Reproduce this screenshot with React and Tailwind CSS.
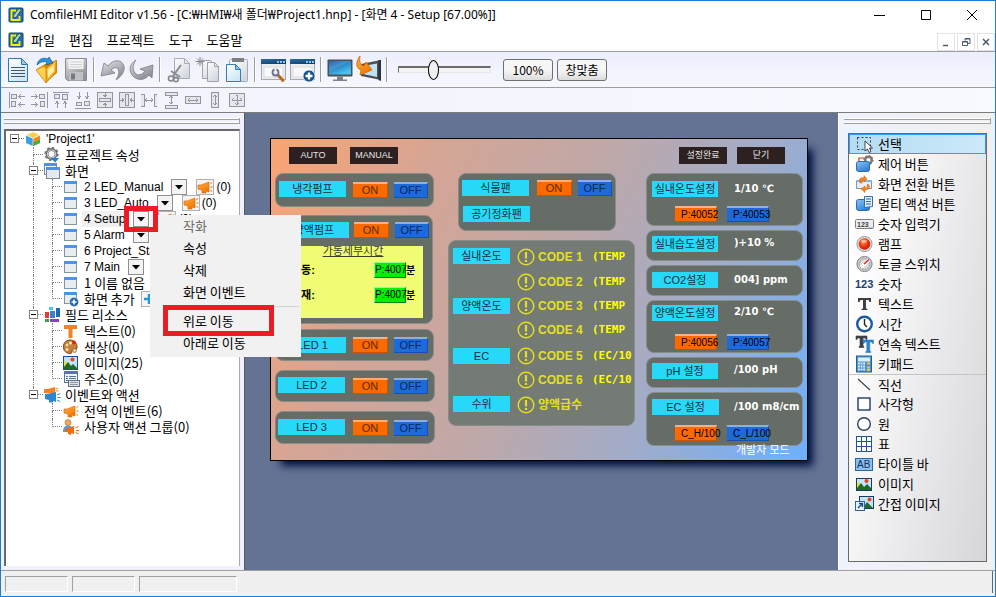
import React from 'react';

/* ---------- shared gradients ---------- */

function Gradients() {
  const stops = {
    gPaper: ['#ffffff', '#cfe6f5'],
    gGray: ['#e4e4e6', '#8f9196'],
    gArrow: ['#e2e2e4', '#8b8d92'],
    gScreen: ['#0a4fa0', '#4cc4f0'],
    gOrange: ['#ffb347', '#f07800'],
    gBlue: ['#8cc4f5', '#2f80d8'],
    gYellow: ['#ffe27a', '#f0a000'],
    gBar: ['#2f6ea5', '#0f4272'],
    gSheet: ['#fdfdfd', '#d4d9e0'],
  };
  return (
    <svg width="0" height="0" className="absolute" aria-hidden="true">
      <defs>
        {Object.entries(stops).map(([id, [a, b]]) => (
          <linearGradient key={id} id={id} x1="0" y1="0" x2="0.6" y2="1">
            <stop offset="0" stopColor={a} />
            <stop offset="1" stopColor={b} />
          </linearGradient>
        ))}
        <radialGradient id="gLamp" cx="0.4" cy="0.35" r="0.7">
          <stop offset="0" stopColor="#ff9a5a" />
          <stop offset="0.5" stopColor="#f03a10" />
          <stop offset="1" stopColor="#c01800" />
        </radialGradient>
      </defs>
    </svg>
  );
}

function Svg({ w = 16, h = w, vb, children }) {
  return (
    <svg width={w} height={h} viewBox={vb || `0 0 ${w} ${h}`} fill="none" className="block shrink-0" aria-hidden="true">
      {children}
    </svg>
  );
}

/* ---------- main tool bar icons ---------- */

function AppLogo() {
  return (
    <Svg w={16}>
      <rect x="1" y="1" width="14" height="14" rx="1" fill="#2a6fae" stroke="#0c3f75" />
      <path d="M8 3.500H3.500v9.500h8V9" stroke="#f2f200" strokeWidth="1.800" />
      <path d="M5.500 9l1 2 2-1 4.500-7-2-1z" fill="#8fd0f0" stroke="#123c66" strokeWidth=".8" />
      <path d="M6 9.500l5-7 1.500 1" stroke="#f2f200" />
    </Svg>
  );
}
function NewDoc() {
  return (
    <Svg w={22} h={26}>
      <path d="M1.500 1.500h13l6 6v17h-19z" fill="url(#gPaper)" stroke="#2f78ac" />
      <path d="M14.500 1.500v6h6z" fill="#9ccbe8" stroke="#2f78ac" />
      <path d="M4 10.500h14M4 13.500h14M4 16.500h14M4 19.500h14" stroke="#41586c" />
    </Svg>
  );
}
function OpenFolder() {
  return (
    <Svg w={26} h={28}>
      <path d="M3 13l8-5 12-4v13l-11 9z" fill="#d98a00" />
      <path d="M12 13l10-9v12l-10 11z" fill="url(#gYellow)" stroke="#c77c00" strokeWidth=".8" />
      <path d="M2 14l8-4 2 3 0 14z" fill="#ffcf4d" stroke="#d08400" strokeWidth=".8" />
      <path d="M14 14l6-5v6l-6 7z" fill="#fff0b0" />
      <path d="M3 9c1-6 6-8 11-6l1-2 4 6-7 2 1-3c-4-1-7 0-10 3z" fill="#2b94dc" stroke="#0f5c9c" strokeWidth=".7" />
    </Svg>
  );
}
function Save() {
  return (
    <Svg w={24} h={26}>
      <path d="M1.500 1.500h21v22h-19l-2-2z" fill="url(#gGray)" stroke="#8a8c90" />
      <rect x="4.500" y="2" width="15" height="10" fill="#f4f4f5" />
      <path d="M6 5h12M6 7.500h12M6 10h12" stroke="#cfd0d3" />
      <rect x="5" y="15" width="14" height="8.500" fill="#bfc0c4" />
      <rect x="7" y="16.500" width="4" height="6" fill="#77797e" />
    </Svg>
  );
}
function Undo() {
  return (
    <Svg w={26} h={24}>
      <path d="M1 18L4 5l4 3C13 1 22 1 24 8c1 5-2 10-8 14 3-5 4-10 1-12-2-1-4 0-6 2l4 3z" fill="url(#gArrow)" stroke="#85878c" strokeWidth=".9" />
    </Svg>
  );
}
function Redo() {
  return (
    <Svg w={26} h={24}>
      <path d="M7 2C0 6-1 14 5 19c5 4 11 3 15-2l3 3 1-13-13 4 5 2c-3 4-7 5-10 2-3-4-2-9 1-13z" fill="url(#gArrow)" stroke="#85878c" strokeWidth=".9" />
    </Svg>
  );
}
function Cut() {
  return (
    <Svg w={24} h={26}>
      <path d="M7.500 1.500h10l5 5v15h-15z" fill="url(#gSheet)" stroke="#a9adb3" />
      <path d="M17.500 1.500v5h5" stroke="#a9adb3" />
      <path d="M14 8L6 19M4 14l9 6" stroke="#8a8d92" strokeWidth="2" />
      <circle cx="4" cy="21.500" r="2.500" stroke="#85878c" strokeWidth="1.600" />
      <circle cx="9" cy="22.500" r="2.200" stroke="#85878c" strokeWidth="1.600" />
    </Svg>
  );
}
function Copy() {
  return (
    <Svg w={26} h={26}>
      <path d="M7.500 3.500h8l4 4v14h-12z" fill="url(#gSheet)" stroke="#9fa3a9" />
      <path d="M12.500 5.500h7l4 4v15h-11z" fill="url(#gSheet)" stroke="#9fa3a9" />
      <path d="M19.500 5.500v4h4" stroke="#9fa3a9" />
      <path d="M5 0v9M.5 4.500h9M2 1.500l6 6M8 1.500l-6 6" stroke="#85888d" />
    </Svg>
  );
}
function Paste() {
  return (
    <Svg w={24} h={26}>
      <rect x="4.500" y="2.500" width="18" height="22" rx="1" fill="url(#gSheet)" stroke="#a7abb1" />
      <path d="M7 1h12v4H7z" fill="#7c8086" />
      <path d="M1.500 7.500h9l5 5v12h-14z" fill="url(#gPaper)" stroke="#2f83bb" />
      <path d="M10.500 7.500v5h5z" fill="#8ec6e8" stroke="#2f83bb" />
    </Svg>
  );
}
function WindowBase() {
  return (
    <>
      <rect x=".5" y="2.500" width="24" height="20" fill="#ececee" stroke="#a6a9ae" />
      <rect x="0" y="2" width="25" height="5" fill="url(#gBar)" />
      <path d="M16 4h2v2h-2zM19 4h2v2h-2zM22 4h2v2h-2z" fill="#8fc8ee" />
      <rect x="3" y="10" width="19" height="10" fill="#f8f8f9" stroke="#cfd1d4" strokeWidth=".7" />
    </>
  );
}
function WindowTool() {
  return (
    <Svg w={26} h={26}>
      <WindowBase />
      <path d="M16 17l6 6.500" stroke="#b86a1c" strokeWidth="3" strokeLinecap="round" />
      <circle cx="14.500" cy="15.500" r="3" fill="#e8ecf4" stroke="#6b7390" strokeWidth="1.800" />
      <path d="M14.500 15.500V11" stroke="#ececee" strokeWidth="2" />
    </Svg>
  );
}
function WindowAdd() {
  return (
    <Svg w={26} h={26}>
      <WindowBase />
      <circle cx="19" cy="19" r="6" fill="#15538c" stroke="#e9f2fa" strokeWidth=".8" />
      <path d="M15.500 19h7M19 15.500v7" stroke="#fff" strokeWidth="2.400" />
    </Svg>
  );
}
function Monitor() {
  return (
    <Svg w={26} h={26}>
      <rect x=".5" y="2.500" width="25" height="17" rx="1" fill="#4b5056" />
      <rect x="2" y="4" width="22" height="13.500" fill="url(#gScreen)" />
      <path d="M2 4h22L2 14z" fill="#fff" opacity=".14" />
      <path d="M10 19.500h6v3h4v1.500H6v-1.500h4z" fill="#7c8187" />
    </Svg>
  );
}
function Download() {
  return (
    <Svg w={26} h={28}>
      <path d="M5 8l20-4v20L5 20z" fill="#4b4f55" />
      <path d="M7 10l14-2.500v13.500L7 18z" fill="#bfe2f4" />
      <path d="M22.500 4h2.500v21l-2.500-1z" fill="#2f3236" />
      <path d="M4 0C0 5-1 12 5 14l-1 5 12-5-6-8-2 4C4 9 3 5 4 0z" fill="url(#gOrange)" stroke="#d06a00" strokeWidth=".8" />
    </Svg>
  );
}

/* ---------- alignment tool bar icons (18 x 18) ---------- */

const alignIcons = [
  ['왼쪽 맞춤', <path key="a" d="M1 1v16M3.500 3.500h5v4h-5zM17 5.500h-6M13 3l-2.500 2.500L13 8M3.500 10.500h4v5h-4zM17 13.500h-6M13 11l-2.500 2.500L13 16" />],
  ['오른쪽 맞춤', <path key="a" d="M17 1v16M9.500 3.500h5v4h-5zM1 5.500h6M5 3l2.500 2.500L5 8M10.500 10.500h4v5h-4zM1 13.500h6M5 11l2.500 2.500L5 16" />],
  ['위쪽 맞춤', <path key="a" d="M1 1h16M2.500 3.500h5v4h-5zM10.500 3.500h5v5h-5zM5 17v-6M3 13l2-2.500L7 13M13 17v-6M11 13l2-2.500 2 2.500" />],
  ['아래쪽 맞춤', <path key="a" d="M1 17h16M2.500 11.500h5v3h-5zM10.500 10.500h5v4h-5zM5 1v6M3 5l2 2.500L7 5M13 1v6M11 5l2 2.500L15 5" />],
  ['세로 가운데', <path key="a" d="M1.500 1.500h15v15h-15zM3.500 7.500h11v3h-11zM9 1.500v4M9 16.500v-4M7.500 4L9 5.500 10.500 4M7.500 14L9 12.500l1.500 1.500" />],
  ['가로 가운데', <path key="a" d="M1.500 1.500h15v15h-15zM7.500 3.500h3v11h-3zM1.500 9h4M16.500 9h-4M4 7.500L5.500 9 4 10.500M14 7.500L12.500 9l1.500 1.500" />],
  ['가로 간격', <path key="a" d="M1 3h3v12H1M17 3h-3v12h3M5 9h8M7 7L5 9l2 2M11 7l2 2-2 2" />],
  ['세로 간격', <path key="a" d="M3 1h12v3H3zM3 14h12v3H3zM9 5v8M7 7l2-2 2 2M7 11l2 2 2-2" />],
  ['너비 맞춤', <path key="a" d="M1.500 5.500h15v7h-15zM4 9h10M6 7L4 9l2 2M12 7l2 2-2 2" />],
  ['높이 맞춤', <path key="a" d="M5.500 1.500h7v15h-7zM9 4v10M7 6l2-2 2 2M7 12l2 2 2-2" />],
  ['크기 맞춤', <path key="a" d="M1.500 2.500h15v13h-15zM9 4v10M4 9h10M7.500 5.500L9 4l1.500 1.500M7.500 12.500L9 14l1.500-1.500M5.500 7.500L4 9l1.500 1.500M12.500 7.500L14 9l-1.500 1.500" />],
];

/* ---------- tree icons ---------- */

const treeIcons = {
  cube: (
    <Svg w={18} h={16}>
      <path d="M9 1l6.500 3L9 7 2.500 4z" fill="#ffd050" />
      <path d="M2 4.500L8.700 7.500V15L2 12z" fill="#3aa0e6" />
      <path d="M16 4.500L9.300 7.500V15L16 12z" fill="#f5871e" />
      <path d="M9.300 11.500L16 8.500V12l-6.700 3z" fill="#3fae49" />
    </Svg>
  ),
  gear: (
    <Svg w={18} h={16}>
      <circle cx="8.500" cy="7" r="4.500" stroke="#6f7276" strokeWidth="3" />
      <circle cx="8.500" cy="7" r="6.200" stroke="#6f7276" strokeWidth="1.800" strokeDasharray="2.400 2.400" />
      <circle cx="8.500" cy="7" r="4" stroke="#c9cbcf" strokeWidth="1.200" />
      <path d="M8 11h8l-4 4.500z" fill="#1f7fd6" />
    </Svg>
  ),
  windows: (
    <Svg w={18} h={16}>
      <rect x="1.500" y=".5" width="12" height="11" fill="#f2f4f8" stroke="#7b8aa0" />
      <rect x="1" y="0" width="13" height="3" fill="#4a94e2" />
      <rect x="3.500" y="4.500" width="13" height="11" fill="#e6e9ee" stroke="#7b8aa0" />
      <rect x="3" y="4" width="14" height="3" fill="#4a94e2" />
    </Svg>
  ),
  screen: (
    <Svg w={18} h={16}>
      <rect x="2.500" y="2.500" width="12" height="11" fill="#e8ebf0" stroke="#8793a4" />
      <rect x="2" y="2" width="13" height="3" fill="#4a94e2" />
    </Svg>
  ),
  screenAdd: (
    <Svg w={18} h={16}>
      <rect x="2.500" y="1.500" width="12" height="11" fill="#e8ebf0" stroke="#8793a4" />
      <rect x="2" y="1" width="13" height="3" fill="#4a94e2" />
      <circle cx="12" cy="11" r="4.700" fill="#2465a8" stroke="#fff" strokeWidth=".6" />
      <path d="M9.500 11h5M12 8.500v5" stroke="#fff" strokeWidth="1.600" />
    </Svg>
  ),
  blocks: (
    <Svg w={18} h={16}>
      <rect x="6" y="0" width="4" height="3" fill="#46c8f0" />
      <rect x="2" y="5" width="4" height="6" fill="#e23c34" />
      <rect x="7" y="4" width="5" height="7" fill="#3f7fd2" />
      <rect x="13" y="1" width="4" height="9" fill="#1e6ab4" />
      <rect x="2" y="12" width="4" height="3" fill="#38a04a" />
      <rect x="7" y="12" width="9" height="3" fill="#8a3fc0" />
    </Svg>
  ),
  textT: (
    <Svg w={18} h={16}>
      <path d="M2 2h13v4h-4.500v9h-4V6H2z" fill="#f58220" />
    </Svg>
  ),
  palette: (
    <Svg w={18} h={16}>
      <path d="M8 1C3 1 1 5 1.500 9S6 15 9 14.500c1.500-.5 0-2.500 1.500-3.500s4 .5 4.500-2C15.500 4 12 1 8 1z" fill="#c98038" stroke="#7c4614" />
      <circle cx="5" cy="6" r="1.500" fill="#f4d8a0" />
      <circle cx="8.500" cy="4" r="1.500" fill="#f8ecd0" />
      <circle cx="12" cy="3.500" r="2" fill="#e02418" />
      <circle cx="5" cy="10.500" r="1.500" fill="#f8e8c0" />
      <circle cx="12.500" cy="11.500" r="2" fill="#e8d4b0" stroke="#7c4614" strokeWidth=".6" />
    </Svg>
  ),
  picture: (
    <Svg w={18} h={16}>
      <rect x="1.500" y="1.500" width="14" height="13" fill="#bfe4f8" stroke="#15508c" />
      <path d="M2 5l3 3v6H2z" fill="#e8e23c" />
      <path d="M2 14v-2l4-5 3 4 2-2 4 4v1z" fill="#1f6a2c" />
      <circle cx="10.500" cy="4.500" r="2" fill="#e84020" />
    </Svg>
  ),
  address: (
    <Svg w={18} h={16}>
      <rect x="2.500" y=".5" width="13" height="11" fill="#eef3f9" stroke="#52769e" />
      <rect x="2" y="0" width="14" height="3" fill="#4a7ab0" />
      <path d="M4 5.500h2M7 5.500h7M4 7.500h2M7 7.500h7M4 9.500h2" stroke="#52769e" />
      <rect x="6.500" y="9.500" width="11" height="6" fill="#dfe4ea" stroke="#62707e" />
      <path d="M8 11.500h8M8 13.500h8" stroke="#8d98a4" />
    </Svg>
  ),
  horns: (
    <Svg w={18} h={16}>
      <path d="M1 2h4l7-2v7L1 6z" fill="#f58220" />
      <path d="M12.500 2l2-1M13 4h2.500" stroke="#f58220" />
      <path d="M2 7h3l8-2v10l-3-1v1.500H6V13l-4-1z" fill="#2d86d2" />
      <path d="M14 8l3-1.500M14.500 10.500h3M14 13l3 1.500" stroke="#2d86d2" />
    </Svg>
  ),
  horn: <Horn />,
  userHorn: (
    <Svg w={18} h={16}>
      <circle cx="6" cy="3.500" r="3" fill="#f0a860" stroke="#b86a28" strokeWidth=".6" />
      <path d="M1 13c0-5 2-6.500 5-6.500S11 8 11 13z" fill="#5a9ad8" />
      <path d="M3 10l9-3v8l-3-1v2l-3-1v-2l-3-1z" fill="#f06a10" />
      <path d="M13.500 9l3-1.500M14 11.500h3M13.500 13.500l3 1.500" stroke="#f06a10" />
    </Svg>
  ),
};

function Horn() {
  return (
    <Svg w={18} h={16}>
      <path d="M2 6h3l8-3v10l-3-1v2H6v-3L2 10z" fill="url(#gOrange)" stroke="#e06000" strokeWidth=".6" />
      <path d="M14.500 4.500l1.500-1M14.500 8h2M14.500 11.500l1.500 1" stroke="#e06000" />
    </Svg>
  );
}

/* ---------- toolbox icons ---------- */

const toolIcons = {
  select: (
    <Svg w={20} h={18}>
      <rect x="2.500" y="2.500" width="13" height="12" stroke="#2c3c4c" strokeDasharray="2 2" />
      <path d="M10 6v10l2.500-2 1.500 3.500 2-1-1.500-3.500h3z" fill="#fff" stroke="#1a1a2a" strokeWidth=".8" />
    </Svg>
  ),
  control: (
    <Svg w={20} h={18}>
      <path d="M4 8V3h6" stroke="#e02818" strokeWidth="1.200" />
      <circle cx="13.500" cy="5" r="3.300" stroke="#75797e" strokeWidth="2.400" />
      <circle cx="13.500" cy="5" r="4.700" stroke="#75797e" strokeDasharray="1.800 1.800" />
      <rect x="1.500" y="6.500" width="13" height="10" rx="2" fill="url(#gBlue)" stroke="#2a6cb4" />
    </Svg>
  ),
  swap: (
    <Svg w={20} h={18}>
      <rect x="1.500" y="5.500" width="15" height="8" fill="#e8eef5" stroke="#8195ae" />
      <path d="M1 5h16v2H1z" fill="#8ab4e0" />
      <path d="M5 8c-2-4 1-6 4-5V.5L12 4 9 7V5c-2 0-2 1-2 3zM13 9c3 3 1 6-3 6v2.500L6 14l4-3v2c2 0 3-1 2-3z" fill="#f58220" stroke="#d06000" strokeWidth=".5" />
    </Svg>
  ),
  multi: (
    <Svg w={20} h={18}>
      <rect x="1.500" y="4.500" width="13" height="11" rx="2" fill="url(#gBlue)" stroke="#2a6cb4" />
      <path d="M9.500 1.500h8v10l-8 1z" fill="#e4f0fa" stroke="#2f6ca8" />
      <path d="M11 4h5M11 6.500h5M11 9h5" stroke="#39648e" />
    </Svg>
  ),
  input: (
    <Svg w={20} h={18}>
      <rect x=".5" y="4.500" width="18" height="9" rx="1" fill="#eeeeee" stroke="#7c7f84" />
      <text x="2" y="12" fontSize="7" fontWeight="bold" fill="#3c4046" fontFamily="Liberation Sans">123_</text>
    </Svg>
  ),
  lamp: (
    <Svg w={20} h={18}>
      <circle cx="9.500" cy="9" r="7.600" fill="#d9dadc" stroke="#9a9da1" />
      <circle cx="9.500" cy="9" r="5.800" fill="url(#gLamp)" />
      <ellipse cx="9" cy="6" rx="3" ry="1.500" fill="#fff" opacity=".45" />
    </Svg>
  ),
  toggle: (
    <Svg w={20} h={18}>
      <circle cx="9.500" cy="9" r="7.600" fill="#c9cbce" stroke="#83878c" />
      <circle cx="9.500" cy="9" r="5.400" fill="#dcdcde" stroke="#a4a7ab" />
      <path d="M5 13L14 5" stroke="#fff" strokeWidth="3.600" />
      <path d="M9 9l5-4.500" stroke="#e02020" strokeWidth="1.600" />
      <path d="M4.500 11.500l2 2.500" stroke="#8a8d92" />
    </Svg>
  ),
  number: (
    <Svg w={20} h={18}>
      <text x="0" y="13" fontSize="11" fontWeight="bold" fill="#20406c" fontFamily="Liberation Sans">123</text>
    </Svg>
  ),
  text: (
    <Svg w={20} h={18}>
      <path d="M3 3h13v4h-1.500l-1-2H11v8.500l1.500.5v1h-6v-1l1.500-.5V5H5.500l-1 2H3z" fill="#3e4247" />
    </Svg>
  ),
  clock: (
    <Svg w={20} h={18}>
      <circle cx="9.500" cy="9" r="7.300" fill="#fff" stroke="#1c5a9c" strokeWidth="2.400" />
      <path d="M9.500 4v5.500L12 12" stroke="#222" strokeWidth="1.400" />
    </Svg>
  ),
  texts: (
    <Svg w={20} h={18}>
      <path d="M1 1h11v3.500h-1l-.7-1.500H8v8l1 .5v1H4v-1l1-.5V3H2.700L2 4.500H1z" fill="#3e4247" stroke="#3e4247" strokeWidth=".6" />
      <path d="M8 5h10.500v3.500h-1l-.7-1.500h-2v9l1 .5v1h-5v-1l1-.5V7H9.700L9 8.500H8z" fill="#2a83cc" stroke="#2a83cc" strokeWidth=".6" />
    </Svg>
  ),
  keypad: (
    <Svg w={20} h={18}>
      <rect x="1.500" y="1" width="15" height="16" fill="#4d93d0" stroke="#22609c" />
      <rect x="3" y="2.500" width="12" height="4" fill="#dcecf8" />
      <path d="M3 8.500h7M3 11.500h7M3 14.500h7" stroke="#e2eefa" strokeWidth="2" strokeDasharray="1.800 .8" />
      <path d="M12 8.500h3M12 12.500h3M12 15h3" stroke="#f5c040" strokeWidth="2" />
    </Svg>
  ),
  line: (
    <Svg w={20} h={18}>
      <path d="M3 3l12 11" stroke="#3c4450" strokeWidth="1.200" />
    </Svg>
  ),
  rect: (
    <Svg w={20} h={18}>
      <rect x="3" y="3" width="12" height="12" fill="#fff" stroke="#1c3c6c" strokeWidth="1.400" />
    </Svg>
  ),
  circle: (
    <Svg w={20} h={18}>
      <circle cx="9" cy="9" r="6.300" fill="#fff" stroke="#2c4058" strokeWidth="1.400" />
    </Svg>
  ),
  table: (
    <Svg w={20} h={18}>
      <rect x="1.500" y="1.500" width="15" height="15" fill="#fff" stroke="#1f5596" />
      <path d="M6.500 2v14M11.500 2v14M2 6.500h14M2 11.500h14" stroke="#1f5596" />
    </Svg>
  ),
  titlebar: (
    <Svg w={20} h={18}>
      <rect x=".5" y="3.500" width="17" height="12" fill="#8cc0ee" stroke="#2a64a4" />
      <text x="2" y="13" fontSize="10" fill="#10305c" fontFamily="Liberation Sans">AB</text>
    </Svg>
  ),
  image: (
    <Svg w={20} h={18}>
      <rect x="1.500" y="3.500" width="15" height="12" fill="#c4e6fa" stroke="#1c3c64" />
      <path d="M2 6l3 3v6H2z" fill="#e8e23c" />
      <path d="M2 15v-2l4-5 3 4 3-3 4 4v2z" fill="#1f6a2c" />
      <circle cx="11.500" cy="6" r="2" fill="#e84020" />
    </Svg>
  ),
  indirect: (
    <Svg w={20} h={18}>
      <rect x="4.500" y="1.500" width="14" height="12" fill="#c4e6fa" stroke="#1c3c64" />
      <path d="M8 13l4-6 3 3 3 3z" fill="#1f6a2c" />
      <circle cx="14.500" cy="4.500" r="2" fill="#e84020" />
      <rect x=".5" y="6.500" width="9" height="9" fill="#e6f1fb" stroke="#2a64a4" />
      <path d="M3 13l4-4M4 8.500h3.500V12" stroke="#154a86" strokeWidth="1.400" />
    </Svg>
  ),
};

/* ---------- title and menu ---------- */

function TitleBar() {
  return (
    <header className="flex h-7 shrink-0 items-center bg-white pl-[7px]">
      <AppLogo />
      <h1 className="ml-1.5 flex-1 truncate font-['Noto_Sans','Noto_Sans_CJK_KR',sans-serif] text-xs">
        ComfileHMI Editor v1.56 - [C:₩HMI₩새 폴더₩Project1.hnp] - [화면 4 - Setup [67.00%]]
      </h1>
      <button type="button" aria-label="최소화" className="flex h-7 w-[46px] items-center justify-center">
        <Svg w={12}><path d="M0 6.500h11" stroke="#000" /></Svg>
      </button>
      <button type="button" aria-label="최대화" className="flex h-7 w-[46px] items-center justify-center">
        <Svg w={12}><path d="M1.500 1.500h9v9h-9z" stroke="#000" /></Svg>
      </button>
      <button type="button" aria-label="닫기" className="flex h-7 w-[46px] items-center justify-center">
        <Svg w={12}><path d="M1 1l10 10M11 1L1 11" stroke="#000" /></Svg>
      </button>
    </header>
  );
}

const mdiButtons = [
  ['창 최소화', <path key="p" d="M4 10.500h5" stroke="#4b5a6c" strokeWidth="1.500" />],
  ['창 복원', <path key="p" d="M6 5.500V3.500h5v5h-2M6 4h5M3.500 6.500h5v4h-5zM4 7h5" stroke="#4b5a6c" />],
  ['창 닫기', <path key="p" d="M4 4l6 6M10 4l-6 6" stroke="#4b5a6c" strokeWidth="1.500" />],
];

function MenuBar() {
  return (
    <nav className="flex h-[22px] shrink-0 items-center bg-white pl-[7px]">
      <AppLogo />
      <div className="flex flex-1 gap-[14px] pl-[7px]">
        {['파일', '편집', '프로젝트', '도구', '도움말'].map((m) => (
          <button key={m} type="button">{m}</button>
        ))}
      </div>
      <div className="flex gap-0.5 self-end">
        {mdiButtons.map(([label, glyph]) => (
          <button key={label} type="button" aria-label={label} className="flex size-[18px] items-center justify-center border border-[#e3e3e3] bg-white">
            <Svg w={15}>{glyph}</Svg>
          </button>
        ))}
      </div>
    </nav>
  );
}

/* ---------- tool bars ---------- */

const toolGroups = [
  [['새 프로젝트', NewDoc], ['열기', OpenFolder], ['저장', Save]],
  [['실행 취소', Undo], ['다시 실행', Redo]],
  [['잘라내기', Cut], ['복사', Copy], ['붙여넣기', Paste]],
  [['화면 속성', WindowTool], ['화면 추가', WindowAdd]],
  [['시뮬레이션', Monitor], ['다운로드', Download]],
];

function ToolBar() {
  return (
    <div className="flex h-9 shrink-0 items-center border-t border-[#9d9d9d] bg-linear-to-b from-[#eceffc] to-[#f6f8ff] pl-0.5">
      {toolGroups.map((group, i) => (
        <div key={i} className="flex items-center">
          {group.map(([label, Icon]) => (
            <button key={label} type="button" aria-label={label} className="flex h-8 w-[29px] items-center justify-center">
              <Icon />
            </button>
          ))}
          <span className="mx-[3px] h-[25px] w-0.5 border-l border-[#9d9d9d] bg-white" />
        </div>
      ))}
      <input
        type="range"
        min="0"
        max="100"
        defaultValue="36"
        aria-label="확대 비율"
        className="ml-[7px] h-5 w-[93px] appearance-none bg-transparent [&::-webkit-slider-runnable-track]:h-[7px] [&::-webkit-slider-runnable-track]:border [&::-webkit-slider-runnable-track]:border-t-2 [&::-webkit-slider-runnable-track]:border-[#e6e6e6] [&::-webkit-slider-runnable-track]:border-t-[#6b6b6b] [&::-webkit-slider-runnable-track]:border-l-[#6b6b6b] [&::-webkit-slider-runnable-track]:bg-[#f3f3f3] [&::-webkit-slider-thumb]:-mt-2 [&::-webkit-slider-thumb]:h-5 [&::-webkit-slider-thumb]:w-[11px] [&::-webkit-slider-thumb]:appearance-none [&::-webkit-slider-thumb]:rounded-[50%] [&::-webkit-slider-thumb]:border [&::-webkit-slider-thumb]:border-black [&::-webkit-slider-thumb]:bg-[#f0f0f0]"
      />
      <div className="ml-3 flex gap-1">
        {['100%', '창맞춤'].map((t) => (
          <button key={t} type="button" className="h-[22px] w-[50px] rounded-[3px] border border-[#707070] bg-linear-to-b from-[#f6f6f6] from-50% to-[#dcdcdc] text-xs leading-5">
            {t}
          </button>
        ))}
      </div>
    </div>
  );
}

function AlignBar() {
  return (
    <div className="flex h-[25px] shrink-0 items-center gap-1 border-t border-[#9d9d9d] bg-linear-to-r from-[#f0f2fd] to-[#f8faff] pl-[7px]">
      {alignIcons.map(([label, glyph]) => (
        <button key={label} type="button" aria-label={label}>
          <svg width="18" height="18" viewBox="0 0 18 18" fill="#d4d4d8" fillOpacity=".4" stroke="#94969a" shapeRendering="crispEdges" className="block">
            {glyph}
          </svg>
        </button>
      ))}
    </div>
  );
}

/* ---------- project tree ---------- */

// Each guide is one indent column: '' blank, '|' line, '+' tee, 'L' last item,
// 'B' expand box on a line, 'E' expand box on the last item, 'R' root box.
const treeRows = [
  { guides: ['R'], icon: 'cube', text: "'Project1'", latin: true },
  { guides: ['', '+'], icon: 'gear', text: '프로젝트 속성' },
  { guides: ['', 'B'], icon: 'windows', text: '화면' },
  { guides: ['', '|', '+'], icon: 'screen', text: '2 LED_Manual', latin: true, drop: true },
  { guides: ['', '|', '+'], icon: 'screen', text: '3 LED_Auto', latin: true, drop: true },
  { guides: ['', '|', '+'], icon: 'screen', text: '4 Setup', latin: true, drop: true, selected: true },
  { guides: ['', '|', '+'], icon: 'screen', text: '5 Alarm', latin: true, drop: true },
  { guides: ['', '|', '+'], icon: 'screen', text: '6 Project_Start', latin: true },
  { guides: ['', '|', '+'], icon: 'screen', text: '7 Main', latin: true, drop: true },
  { guides: ['', '|', '+'], icon: 'screen', text: '1 이름 없음' },
  { guides: ['', '|', 'L'], icon: 'screenAdd', text: '화면 추가', add: true },
  { guides: ['', 'B'], icon: 'blocks', text: '필드 리소스' },
  { guides: ['', '|', '+'], icon: 'textT', text: '텍스트(0)' },
  { guides: ['', '|', '+'], icon: 'palette', text: '색상(0)' },
  { guides: ['', '|', '+'], icon: 'picture', text: '이미지(25)' },
  { guides: ['', '|', 'L'], icon: 'address', text: '주소(0)' },
  { guides: ['', 'E'], icon: 'horns', text: '이벤트와 액션' },
  { guides: ['', '', '+'], icon: 'horn', text: '전역 이벤트(6)' },
  { guides: ['', '', 'L'], icon: 'userHorn', text: '사용자 액션 그룹(0)' },
];

function Guide({ kind }) {
  const vTop = '|+LBE'.includes(kind) && kind !== '';
  const vBottom = '|+B'.includes(kind) && kind !== '';
  const across = '+LBER'.includes(kind) && kind !== '';
  const box = 'BER'.includes(kind) && kind !== '';
  return (
    <span className="relative flex h-4 w-[19px] shrink-0 flex-col pl-[9px]">
      <span className={`h-2 border-dotted border-[#808080] ${vTop ? 'border-l' : ''} ${across ? 'border-b' : ''}`} />
      <span className={`h-2 border-dotted border-[#808080] ${vBottom ? 'border-l' : ''}`} />
      {box && (
        <button type="button" aria-label="접기" className="absolute top-[3px] left-[5px] flex size-[9px] items-center justify-center border border-[#808080] bg-white">
          <span className="h-px w-[5px] bg-black" />
        </button>
      )}
    </span>
  );
}

function TreeRow({ row }) {
  return (
    <li className="flex h-4 items-center">
      {row.guides.map((g, i) => <Guide key={i} kind={g} />)}
      {treeIcons[row.icon]}
      <span className={`ml-0.5 whitespace-nowrap px-0.5 leading-4 ${row.latin ? "font-['Liberation_Sans',sans-serif] text-xs/4" : ''} ${row.selected ? 'bg-[#f0f0f0]' : ''}`}>
        {row.text}
      </span>
      {row.drop && (
        <>
          <button type="button" aria-label={`${row.text} 메뉴`} className="ml-1.5 flex size-4 shrink-0 items-center justify-center border border-[#8f8f8f] bg-[#f4f4f4]">
            <Svg w={8} h={5}><path d="M0 0h8L4 4.500z" fill="#000" /></Svg>
          </button>
          <button type="button" aria-label={`${row.text} 이벤트`} className="ml-[9px] flex h-4 w-[18px] shrink-0 items-center justify-center overflow-hidden border border-[#b0b0b0] bg-[#f4f4f4]">
            <Horn />
          </button>
          <span className="ml-0.5 font-['Liberation_Sans',sans-serif] text-xs/4">(0)</span>
        </>
      )}
      {row.add && (
        <button type="button" aria-label="추가" className="ml-1 flex size-4 items-center justify-center border border-[#b0b0b0] bg-[#f4f4f4]">
          <Svg w={10}><path d="M5 0v10M0 5h10" stroke="#1e9ad6" strokeWidth="2.400" /></Svg>
        </button>
      )}
    </li>
  );
}

function Gripper() {
  return (
    <div className="flex h-1.5 shrink-0 flex-col justify-between border-r border-[#a0a0a0]">
      <span className="h-0.5 border-b border-[#a0a0a0] bg-white" />
      <span className="h-0.5 border-b border-[#a0a0a0] bg-white" />
    </div>
  );
}

function ProjectPanel() {
  return (
    <aside className="flex w-[244px] shrink-0 flex-col border-r border-[#5a5a5a] bg-[#eff2fd] pt-[5px] pr-1 pb-1 pl-[3px]">
      <Gripper />
      <div className="mt-[5px] flex-1 overflow-hidden border-t-2 border-l-2 border-r border-[#a8a8a8] border-t-[#696969] border-l-[#696969] bg-white">
        <ul className="-ml-px">
          {treeRows.map((r) => <TreeRow key={r.text} row={r} />)}
        </ul>
      </div>
    </aside>
  );
}

/* ---------- HMI screen ---------- */

const groups = [
  'left-[4px] top-[34px] w-[159px] h-[34px] bg-[#666c66]',
  'left-[4px] top-[76px] w-[158px] h-[109px] bg-[#666c66]',
  'left-[4px] top-[190px] w-[159px] h-[32px] bg-[#666c66]',
  'left-[4px] top-[231px] w-[160px] h-[32px] bg-[#666c66]',
  'left-[4px] top-[272px] w-[160px] h-[33px] bg-[#666c66]',
  'left-[187px] top-[34px] w-[158px] h-[58px] bg-[#666c66]',
  'left-[177px] top-[101px] w-[187px] h-[186px] bg-[#747a74]',
  'left-[375px] top-[34px] w-[157px] h-[53px] bg-[#666c66]',
  'left-[375px] top-[91px] w-[157px] h-[31px] bg-[#666c66]',
  'left-[375px] top-[126px] w-[157px] h-[31px] bg-[#666c66]',
  'left-[375px] top-[161px] w-[157px] h-[53px] bg-[#666c66]',
  'left-[375px] top-[218px] w-[157px] h-[31px] bg-[#666c66]',
  'left-[375px] top-[253px] w-[157px] h-[54px] bg-[#666c66]',
];

const labels = [
  ['냉각펌프', 'left-[8px] top-[42px] w-[67px]'],
  ['양액펌프', 'left-[8px] top-[83px] w-[70px]'],
  ['LED 1', 'left-[8px] top-[198px] w-[67px]'],
  ['LED 2', 'left-[7px] top-[238px] w-[67px]'],
  ['LED 3', 'left-[7px] top-[280px] w-[67px]'],
  ['식물팬', 'left-[191px] top-[41px] w-[67px]'],
  ['공기정화팬', 'left-[192px] top-[67px] w-[67px]'],
  ['실내온도', 'left-[182px] top-[109px] w-[57px]'],
  ['양액온도', 'left-[182px] top-[159px] w-[57px]'],
  ['EC', 'left-[182px] top-[209px] w-[57px]'],
  ['수위', 'left-[182px] top-[257px] w-[57px]'],
  ['실내온도설정', 'left-[381px] top-[42px] w-[66px]'],
  ['실내습도설정', 'left-[381px] top-[97px] w-[66px]'],
  ['CO2설정', 'left-[381px] top-[133px] w-[66px]'],
  ['양액온도설정', 'left-[381px] top-[166px] w-[66px]'],
  ['pH 설정', 'left-[381px] top-[224px] w-[66px]'],
  ['EC 설정', 'left-[381px] top-[260px] w-[67px]'],
];

const darkButtons = [
  ['AUTO', 'left-[18px]'],
  ['MANUAL', 'left-[79px]'],
  ['설정완료', 'left-[408px]'],
  ['닫기', 'left-[466px]'],
];

const switches = [
  'left-[82px] top-[43px]',
  'left-[83px] top-[83px]',
  'left-[82px] top-[198px]',
  'left-[82px] top-[239px]',
  'left-[82px] top-[281px]',
  'left-[266px] top-[41px]',
];

const codes = [
  ['CODE 1', '(TEMP', 'top-[109px]'],
  ['CODE 2', '(TEMP', 'top-[134px]'],
  ['CODE 3', '(TEMP', 'top-[158px]'],
  ['CODE 4', '(TEMP', 'top-[182px]'],
  ['CODE 5', '(EC/10', 'top-[208px]'],
  ['CODE 6', '(EC/10', 'top-[232px]'],
  ['양액급수', '', 'top-[257px]'],
];

const values = [
  ['1/10 ℃', 'top-[42px]'],
  [')+10 %', 'top-[96px]'],
  ['004] ppm', 'top-[133px]'],
  ['2/10 ℃', 'top-[165px]'],
  ['/100 pH', 'top-[223px]'],
  ['/100 m8/cm', 'top-[260px]'],
];

const registers = [
  ['P:40052', 'P:40053', 'top-[67px]'],
  ['P:40056', 'P:40057', 'top-[195px]'],
  ['C_H/100', 'C_L/100', 'top-[286px]'],
];

const orange = 'border-t-2 border-r border-b border-t-[#f8b080] border-r-[#c85408] border-b-[#c85408] bg-[#fa6a00]';
const blue = 'border-t-2 border-r border-b border-t-[#90aee0] border-r-[#1650b0] border-b-[#1650b0] bg-[#1e6ad8]';

function HmiScreen() {
  return (
    <div className="relative mt-[25px] ml-[25px] h-[323px] w-[538px] overflow-visible border border-black bg-[linear-gradient(115deg,#fba472_0%,#d6a594_24%,#bfa8a8_50%,#a0acca_74%,#6cb0ff_100%)] font-['Liberation_Sans','Noto_Sans_CJK_KR',sans-serif] text-[11px] shadow-[8px_8px_8px_-3px_#00103c]">
      {groups.map((c) => <div key={c} className={`absolute rounded-lg border border-[#868c8a] ${c}`} />)}

      {darkButtons.map(([t, c]) => (
        <button key={t} type="button" className={`absolute top-[8px] h-[17px] w-12 bg-[#2c2020] text-[9px] leading-[17px] text-[#e6e6e6] ${c}`}>{t}</button>
      ))}

      {labels.map(([t, c]) => (
        <div key={t} className={`absolute h-4 bg-[#28d8f8] text-center leading-4 whitespace-nowrap text-[#12303c] ${c}`}>{t}</div>
      ))}

      {switches.map((c) => (
        <div key={c} className={`absolute flex gap-1.5 ${c}`}>
          <button type="button" className={`h-4 w-[35px] leading-[13px] text-[#5c2800] ${orange}`}>ON</button>
          <button type="button" className={`h-4 w-[34px] leading-[13px] text-[#082858] ${blue}`}>OFF</button>
        </div>
      ))}

      <div className="absolute top-[107px] left-[12px] h-[72px] w-[140px] bg-[#f0fc74] text-black">
        <p className="text-center text-[11px] leading-[11px] text-[#3c4020] underline">가동세부시간</p>
        {['가동', '정재'].map((t) => (
          <div key={t} className="mt-[5px] mb-[9px] flex h-4 items-center pl-2">
            <span className="flex-1 text-[11px] font-bold">{t}:</span>
            <span className="h-4 w-8 overflow-visible border border-t-[#90ff90] border-r-[#008000] border-b-[#008000] border-l-[#90ff90] bg-[#00f000] text-[10px] leading-[14px]">P:4007</span>
            <span className="mr-[7px] w-2.5 text-[10px] font-bold">분</span>
          </div>
        ))}
      </div>

      {codes.map(([name, arg, c]) => (
        <div key={name} className={`absolute left-[246px] flex h-[18px] w-[116px] items-center text-xs font-bold text-[#e4e020] ${c}`}>
          <Svg w={18}>
            <circle cx="9" cy="9" r="7.800" stroke="#e4e020" strokeWidth="1.400" />
            <path d="M9 4v6.500M9 12v2" stroke="#e4e020" strokeWidth="2.200" />
          </Svg>
          <span className="ml-[3px] w-[54px] whitespace-nowrap">{name}</span>
          <span className="font-['DejaVu_Sans_Mono',monospace] text-[11px] text-[#ffff00]">{arg}</span>
        </div>
      ))}

      {values.map(([t, c]) => (
        <div key={c} className={`absolute left-[463px] h-4 font-['DejaVu_Sans','Noto_Sans_CJK_KR',sans-serif] text-[10px] leading-4 font-bold whitespace-nowrap text-white ${c}`}>{t}</div>
      ))}

      {registers.map(([a, b, c]) => (
        <div key={a} className={`absolute left-[404px] flex gap-2.5 text-[10px] whitespace-nowrap text-black ${c}`}>
          <button type="button" className={`h-4 w-[42px] pl-1.5 text-left leading-[13px] ${orange}`}>{a}</button>
          <button type="button" className={`h-4 w-[42px] pl-1.5 text-left leading-[13px] ${blue}`}>{b}</button>
        </div>
      ))}

      <div className="absolute top-[303px] left-[465px] text-[11px] leading-4 text-white">개발자 모드</div>
    </div>
  );
}

/* ---------- toolbox ---------- */

const tools = [
  ['select', '선택'],
  ['control', '제어 버튼'],
  ['swap', '화면 전환 버튼'],
  ['multi', '멀티 액션 버튼'],
  ['input', '숫자 입력기'],
  ['lamp', '램프'],
  ['toggle', '토글 스위치'],
  ['number', '숫자'],
  ['text', '텍스트'],
  ['clock', '시간'],
  ['texts', '연속 텍스트'],
  ['keypad', '키패드'],
  ['line', '직선'],
  ['rect', '사각형'],
  ['circle', '원'],
  ['table', '표'],
  ['titlebar', '타이틀 바'],
  ['image', '이미지'],
  ['indirect', '간접 이미지'],
];

function Toolbox() {
  return (
    <aside className="flex w-[157px] shrink-0 flex-col border-l border-white bg-linear-to-r from-[#eff2fd] to-[#f0f0f0] pt-[5px] pb-2">
      <div className="mr-1 ml-[5px]"><Gripper /></div>
      <ul className="mt-[9px] mr-2 ml-[9px] flex-1 border border-[#696969] bg-[linear-gradient(100deg,#ffffff_15%,#d6d6da_100%)]">
        {tools.map(([id, name]) => (
          <li key={id} className={`h-5 ${id === 'line' ? 'border-t border-[#c4c4c4]' : ''}`}>
            <button
              type="button"
              className={`flex h-full w-full items-center gap-[3px] border pl-[5px] leading-[18px] ${id === 'select' ? 'border-[#3399ff] bg-linear-to-r from-[#b4dcf2] to-[#cbe9fa]' : 'border-transparent'}`}
            >
              {toolIcons[id]}
              {name}
            </button>
          </li>
        ))}
      </ul>
    </aside>
  );
}

/* ---------- context menu ---------- */

function MenuItem({ children, disabled }) {
  return (
    <button type="button" role="menuitem" disabled={disabled} className="block h-[22px] w-full pl-[33px] text-left leading-[22px] text-black disabled:text-[#6d6d6d]">
      {children}
    </button>
  );
}

function ContextMenu() {
  return (
    <div role="menu" className="absolute top-[214px] left-[149px] w-[151px] bg-[#f1f1f1] pb-[3px]">
      <MenuItem disabled>작화</MenuItem>
      <MenuItem>속성</MenuItem>
      <MenuItem>삭제</MenuItem>
      <MenuItem>화면 이벤트</MenuItem>
      <div className="my-[3px] mr-0.5 ml-[29px] h-px bg-[#d2d2d2]" />
      <MenuItem>위로 이동</MenuItem>
      <MenuItem>아래로 이동</MenuItem>
    </div>
  );
}

/* ---------- window ---------- */

export default function App() {
  return (
    <div className="relative flex min-h-screen flex-col border border-[#1a7fd4] bg-[#f0f0f0] font-['Noto_Sans_CJK_KR',sans-serif] text-[13px] text-black">
      <Gradients />
      <TitleBar />
      <MenuBar />
      <ToolBar />
      <AlignBar />
      <main className="flex flex-1 border-t border-[#7c7c7c]">
        <ProjectPanel />
        <section className="min-w-0 flex-1 overflow-hidden bg-[#647394]">
          <HmiScreen />
        </section>
        <Toolbox />
      </main>
      <footer className="flex h-[26px] shrink-0 items-start gap-1 border-t border-[#a0a0a0] pl-1">
        <span className="mt-[5px] h-4 w-[63px] border border-[#a0a0a0] border-r-white border-b-white" />
        <span className="mt-[5px] h-4 w-[63px] border border-[#a0a0a0] border-r-white border-b-white" />
        <span className="mt-[5px] h-4 w-[98px] border border-[#a0a0a0] border-r-white border-b-white" />
        <span className="mr-0.5 ml-auto h-[22px] w-px bg-[#696969]" />
      </footer>
      <ContextMenu />
      <span className="absolute top-[205px] left-[123px] h-[26px] w-[34px] border-5 border-[#ed1c24]" />
      <span className="absolute top-[304px] left-[162px] h-[31px] w-[111px] border-5 border-[#ed1c24]" />
    </div>
  );
}
